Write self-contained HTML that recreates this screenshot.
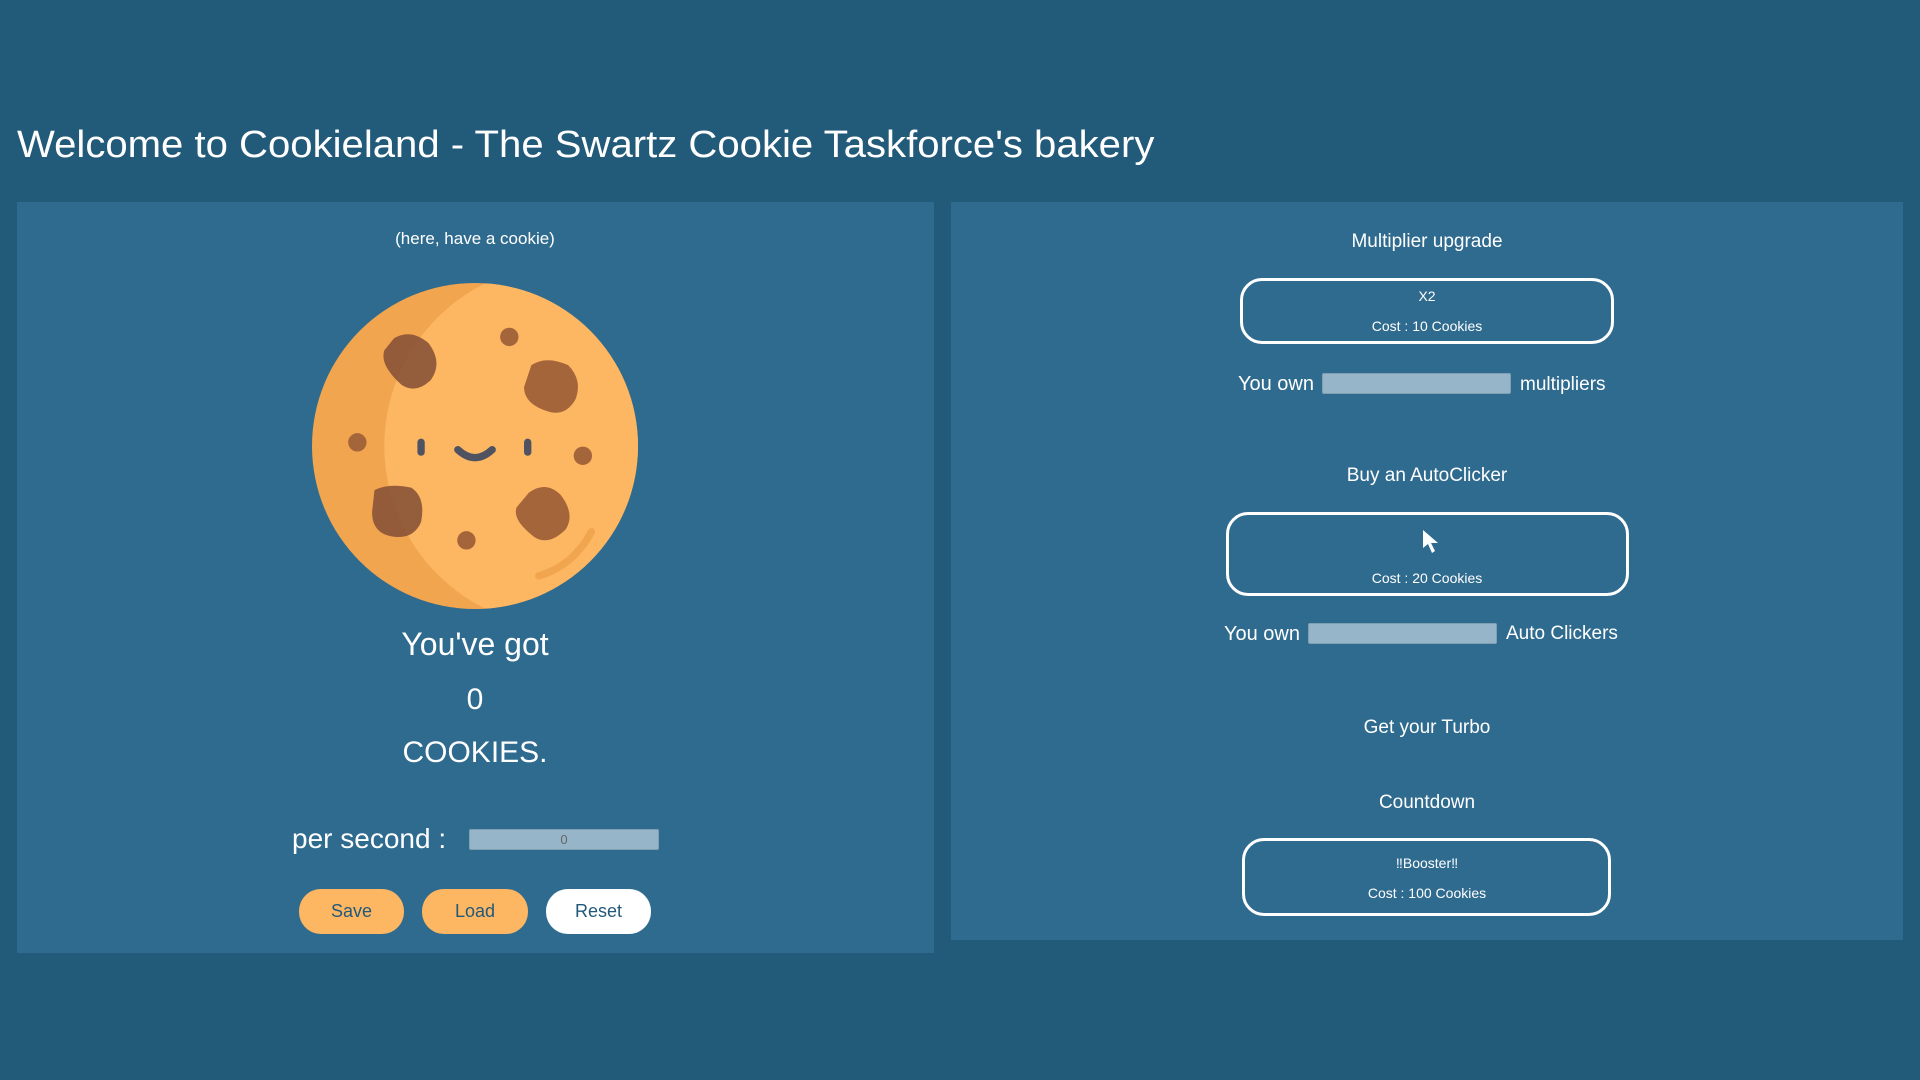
<!DOCTYPE html>
<html><head><meta charset="utf-8"><style>
*{margin:0;padding:0;box-sizing:border-box}
body{width:1920px;height:1080px;background:#225a7a;font-family:"Liberation Sans",sans-serif;color:#fff;position:relative;overflow:hidden}
.a{position:absolute;white-space:nowrap}
.c{transform:translateX(-50%)}
.panel{position:absolute;background:#2f6b8f}
.box{position:absolute;border:3px solid #fff;border-radius:22px}
.inp{position:absolute;background:#97b5c8;border:1px solid #7f9fb3;border-radius:2px}
.btn{position:absolute;border-radius:22px;color:#22587a;font-size:18px;text-align:center;line-height:45px}
</style></head><body>
<div class="a" style="left:17px;top:124px;font-size:38px;transform-origin:left;transform:scaleX(1.055)">Welcome to Cookieland - The Swartz Cookie Taskforce's bakery</div>

<div class="panel" style="left:17px;top:202px;width:917px;height:751px"></div>
<div class="panel" style="left:951px;top:202px;width:952px;height:738px"></div>

<div class="a c" style="left:475px;top:229px;font-size:17px">(here, have a cookie)</div>
<svg class="a" style="left:312px;top:283px" width="326" height="326" viewBox="255 231 266 266">
<defs><clipPath id="cp"><circle cx="388" cy="364" r="133"/></clipPath></defs>
<circle cx="388" cy="364" r="133" fill="#f2a54f"/>
<g clip-path="url(#cp)"><circle cx="462" cy="364" r="148" fill="#fdb762"/></g>
<path d="M322 276 Q336 268 350 280 Q362 296 352 310 Q340 322 328 314 Q310 298 314 286Z" fill="#8b5537" opacity=".92"/>
<path d="M434 298 Q446 290 464 298 Q476 310 470 326 Q462 340 448 336 Q428 330 428 316Z" fill="#a4653a"/>
<path d="M306 400 Q318 394 336 398 Q348 406 344 426 Q338 440 322 438 Q304 436 304 418Z" fill="#8b5537" opacity=".92"/>
<path d="M432 402 Q446 392 458 404 Q470 420 462 432 Q448 446 436 438 Q418 424 422 414Z" fill="#a4653a"/>
<circle cx="416" cy="275" r="7.5" fill="#a4653a"/>
<circle cx="292" cy="361" r="7.5" fill="#a4653a"/>
<circle cx="476" cy="372" r="7.5" fill="#a4653a"/>
<circle cx="381" cy="441" r="7.5" fill="#a4653a"/>
<rect x="341" y="358" width="6" height="14" rx="3" fill="#4f5361"/>
<rect x="428" y="358" width="6" height="14" rx="3" fill="#4f5361"/>
<path d="M374 367 Q388 380 402 367" stroke="#4f5361" stroke-width="6" fill="none" stroke-linecap="round"/>
<path d="M483 434 Q468 462 440 470" stroke="#f2a54f" stroke-width="6" fill="none" stroke-linecap="round"/>
</svg>

<div class="a c" style="left:475px;top:626px;font-size:32px">You've got</div>
<div class="a c" style="left:475px;top:683px;font-size:30px">0</div>
<div class="a c" style="left:475px;top:736px;font-size:30px">COOKIES.</div>
<div class="a" style="left:292px;top:823px;font-size:28px">per second :</div>
<div class="inp" style="left:469px;top:829px;width:190px;height:21px;color:#666;font-size:13px;text-align:center;line-height:19px">0</div>
<div class="btn" style="left:299px;top:889px;width:105px;height:45px;background:#fdb762">Save</div>
<div class="btn" style="left:422px;top:889px;width:106px;height:45px;background:#fdb762">Load</div>
<div class="btn" style="left:546px;top:889px;width:105px;height:45px;background:#fff">Reset</div>

<div class="a c" style="left:1427px;top:231px;font-size:19px">Multiplier upgrade</div>
<div class="box" style="left:1240px;top:278px;width:374px;height:66px"></div>
<div class="a c" style="left:1427px;top:288px;font-size:14px">X2</div>
<div class="a c" style="left:1427px;top:318px;font-size:14px">Cost : 10 Cookies</div>
<div class="a" style="left:1238px;top:373px;font-size:20px">You own</div>
<div class="inp" style="left:1322px;top:373px;width:189px;height:21px"></div>
<div class="a" style="left:1520px;top:374px;font-size:19px">multipliers</div>

<div class="a c" style="left:1427px;top:465px;font-size:19px">Buy an AutoClicker</div>
<div class="box" style="left:1226px;top:512px;width:403px;height:84px"></div>
<svg class="a" style="left:1421px;top:529px" width="20" height="26" viewBox="0 0 20 26"><path d="M2 1 L2 19 L7 15 L11 24 L14 22 L10 14 L17 14Z" fill="#fff"/></svg>
<div class="a c" style="left:1427px;top:570px;font-size:14px">Cost : 20 Cookies</div>
<div class="a" style="left:1224px;top:623px;font-size:20px">You own</div>
<div class="inp" style="left:1308px;top:623px;width:189px;height:21px"></div>
<div class="a" style="left:1506px;top:623px;font-size:19px">Auto Clickers</div>

<div class="a c" style="left:1427px;top:717px;font-size:19px">Get your Turbo</div>
<div class="a c" style="left:1427px;top:792px;font-size:19px">Countdown</div>
<div class="box" style="left:1242px;top:838px;width:369px;height:78px"></div>
<div class="a c" style="left:1427px;top:855px;font-size:14px">‼Booster‼</div>
<div class="a c" style="left:1427px;top:885px;font-size:14px">Cost : 100 Cookies</div>
</body></html>
